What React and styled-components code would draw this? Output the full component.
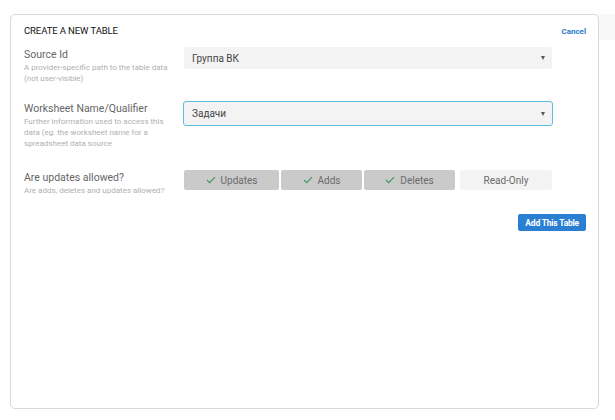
import styled, { createGlobalStyle } from 'styled-components';

const GlobalStyle = createGlobalStyle`
    html, body {
        margin: 0;
        padding: 0;
        background: #fff;
        font-family: Roboto, "Noto Sans", "Liberation Sans", sans-serif;
    }
`;

const Page = styled.div`
    width: 615px;
    height: 420px;
    display: flex;
    box-sizing: border-box;
    padding: 14px 0 0 10px;
    position: relative;
    overflow: hidden;
`;

const Backdrop = styled.div`
    position: absolute;
    right: 0;
    top: 14px;
    width: 17px;
    height: 26px;
    background: #f8f8f8;
`;

const Modal = styled.div`
    position: relative;
    width: 589px;
    height: 395px;
    box-sizing: border-box;
    border: 1px solid #d9d9d9;
    border-radius: 5px;
    background: #fff;
    padding: 8px 12px 0 13px;
    display: flex;
    flex-direction: column;
`;

const Header = styled.div`
    display: flex;
    justify-content: space-between;
    align-items: center;
    height: 14px;
    margin-bottom: 10px;
`;

const Title = styled.h3`
    margin: 0;
    font-size: 9.5px;
    font-weight: 400;
    color: #111;
    letter-spacing: -0.1px;
`;

const Cancel = styled.a`
    font-size: 8px;
    font-weight: 700;
    color: #2b7cc9;
    margin-top: 3px;
    cursor: pointer;
`;

const Row = styled.div`
    display: grid;
    grid-template-columns: 160px 368px;
    align-items: start;
    margin-bottom: ${(p) => p.gap || 0}px;
`;

const LabelBox = styled.div`
    display: flex;
    flex-direction: column;
    padding-top: 1px;
`;

const Label = styled.div`
    font-size: 10.5px;
    color: #666;
    line-height: 13px;
    margin-bottom: 1px;
`;

const Help = styled.div`
    font-size: 8px;
    color: #b0b0b0;
    line-height: 11px;
    width: ${(p) => p.w || 150}px;
`;

const Select = styled.div`
    height: ${(p) => (p.focused ? 25 : 22)}px;
    box-sizing: border-box;
    background: #f3f3f3;
    border: ${(p) => (p.focused ? '1px solid #5bbde0' : 'none')};
    border-radius: ${(p) => (p.focused ? 3 : 2)}px;
    margin-left: ${(p) => (p.focused ? -1 : 0)}px;
    width: ${(p) => (p.focused ? 370 : 368)}px;
    display: flex;
    align-items: center;
    justify-content: space-between;
    padding: 0 7px 0 8px;
    font-size: 10px;
    color: #444;
`;

const Arrow = styled.span`
    width: 0;
    height: 0;
    border-left: 2.5px solid transparent;
    border-right: 2.5px solid transparent;
    border-top: 4px solid #555;
`;

const Toggles = styled.div`
    display: flex;
    height: 20px;
`;

const Toggle = styled.div`
    width: ${(p) => p.w}px;
    margin-right: ${(p) => p.mr}px;
    background: ${(p) => (p.on ? '#cacaca' : '#f3f3f3')};
    border-radius: 2px;
    display: flex;
    align-items: center;
    justify-content: center;
    gap: 5px;
    font-size: 10px;
    color: #6a6a6a;
`;

const Check = () => (
    <svg width="10" height="8" viewBox="0 0 10 8">
        <path d="M1 4 L3.7 6.6 L9 1.2" fill="none" stroke="#3f9a5e" strokeWidth="1.2" />
    </svg>
);

const Footer = styled.div`
    display: flex;
    justify-content: flex-end;
    margin-top: 18px;
`;

const AddButton = styled.button`
    height: 17px;
    padding: 0 7px;
    border: none;
    border-radius: 2px;
    background: #2a7fd3;
    color: #fff;
    font-family: Roboto, "Liberation Sans", sans-serif;
    font-size: 8.5px;
    font-weight: 700;
    letter-spacing: -0.2px;
`;

const toggles = [
    { text: 'Updates', on: true, w: 95, mr: 2 },
    { text: 'Adds', on: true, w: 81, mr: 2 },
    { text: 'Deletes', on: true, w: 91, mr: 5 },
    { text: 'Read-Only', on: false, w: 92, mr: 0 },
];

const App = () => (
    <Page>
        <GlobalStyle />
        <Backdrop />
        <Modal>
            <Header>
                <Title>CREATE A NEW TABLE</Title>
                <Cancel>Cancel</Cancel>
            </Header>
            <Row gap={17}>
                <LabelBox>
                    <Label>Source Id</Label>
                    <Help>A provider-specific path to the table data (not user-visible)</Help>
                </LabelBox>
                <Select>
                    Группа ВК
                    <Arrow />
                </Select>
            </Row>
            <Row gap={21}>
                <LabelBox>
                    <Label>Worksheet Name/Qualifier</Label>
                    <Help>Further information used to access this data (eg: the worksheet name for a spreadsheet data source</Help>
                </LabelBox>
                <Select focused>
                    Задачи
                    <Arrow />
                </Select>
            </Row>
            <Row>
                <LabelBox>
                    <Label>Are updates allowed?</Label>
                    <Help w={155}>Are adds, deletes and updates allowed?</Help>
                </LabelBox>
                <Toggles>
                    {toggles.map((t) => (
                        <Toggle key={t.text} on={t.on} w={t.w} mr={t.mr}>
                            {t.on && <Check />}
                            {t.text}
                        </Toggle>
                    ))}
                </Toggles>
            </Row>
            <Footer>
                <AddButton>Add This Table</AddButton>
            </Footer>
        </Modal>
    </Page>
);

export default App;
